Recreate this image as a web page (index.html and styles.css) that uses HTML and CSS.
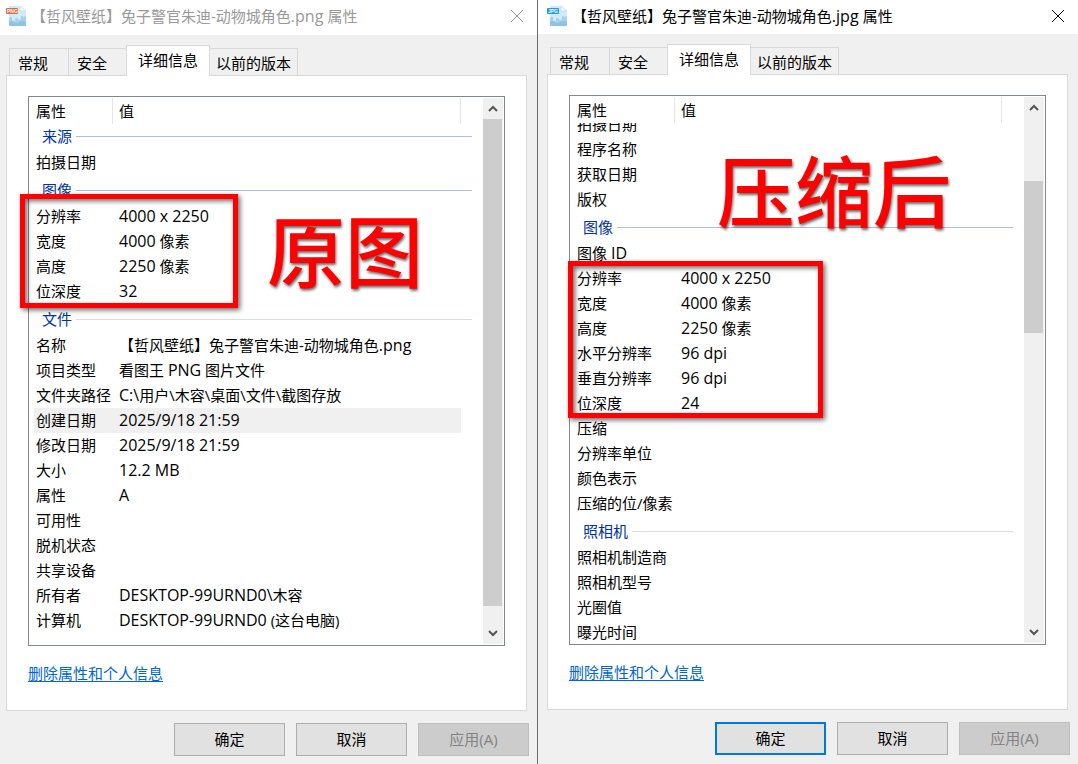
FILE: index.html
```html
<!DOCTYPE html>
<html lang="zh-CN">
<head>
  <meta charset="UTF-8" />
  <meta name="viewport" content="width=device-width, initial-scale=1.0" />
  <title>属性</title>
  <link rel="stylesheet" href="styles.css">
</head>
<body>
  <div class="desktop">

    <!-- PNG dialog -->
    <section class="dialog dialog-png">
      <header class="titlebar">
        <svg class="file-icon" viewBox="0 0 20 20" aria-hidden="true">
          <path d="M3 0h11l6 5v14l-1 1H4l-1-1z" fill="#d3ebf9" />
          <path d="M14 0v5h6z" fill="#f4fafe" stroke="#a9cfe6" stroke-width=".5" />
          <path d="M3 12q1-2 3-1v3q1 2 3 1v-2q2-2 3 0 1 2 3 0v-3q2-1 2 1l3-1v9l-1 1H4l-1-1z" fill="#a4d1ee" />
          <path d="M3 16q3-2 5 0t5 0 7 0v3l-1 1H4l-1-1z" fill="#8cc3e6" />
          <rect y="2" width="12" height="6" rx="1" fill="#e2683c" />
          <text x="1" y="7" class="icon-text">PNG</text>
        </svg>
        <h1 class="title">【哲风壁纸】兔子警官朱迪-动物城角色<span class="latin">.png </span>属性</h1>
        <button class="close" aria-label="关闭">
          <svg viewBox="0 0 12 12"><path d="M0 0l12 12M12 0L0 12" /></svg>
        </button>
      </header>

      <nav class="tabs">
        <button class="tab">常规</button>
        <button class="tab">安全</button>
        <button class="tab active">详细信息</button>
        <button class="tab last">以前的版本</button>
      </nav>

      <div class="panel">
        <div class="list">
          <div class="list-main">
            <table class="list-head">
              <colgroup><col class="col-name"><col><col class="col-end"></colgroup>
              <tr><th>属性</th><th>值</th><td></td></tr>
            </table>
            <div class="list-body">
              <table class="rows">
                <colgroup><col class="col-name"><col><col class="col-end"></colgroup>
                <tr class="group"><th colspan="3"><div>来源</div></th></tr>
                <tr><td>拍摄日期</td><td></td></tr>
                <tr class="group"><th colspan="3"><div>图像</div></th></tr>
                <tr><td>分辨率</td><td><span class="latin">4000 x 2250</span></td></tr>
                <tr><td>宽度</td><td><span class="latin">4000</span> 像素</td></tr>
                <tr><td>高度</td><td><span class="latin">2250</span> 像素</td></tr>
                <tr><td>位深度</td><td><span class="latin">32</span></td></tr>
                <tr class="group light"><th colspan="3"><div>文件</div></th></tr>
                <tr><td>名称</td><td>【哲风壁纸】兔子警官朱迪-动物城角色<span class="latin">.png</span></td></tr>
                <tr><td>项目类型</td><td>看图王 <span class="latin">PNG</span> 图片文件</td></tr>
                <tr><td>文件夹路径</td><td><span class="latin">C:\</span>用户\木容\桌面\文件\截图存放</td></tr>
                <tr class="selected"><td>创建日期</td><td><span class="latin">2025/9/18 21:59</span></td></tr>
                <tr><td>修改日期</td><td><span class="latin">2025/9/18 21:59</span></td></tr>
                <tr><td>大小</td><td><span class="latin">12.2 MB</span></td></tr>
                <tr><td>属性</td><td><span class="latin">A</span></td></tr>
                <tr><td>可用性</td><td></td></tr>
                <tr><td>脱机状态</td><td></td></tr>
                <tr><td>共享设备</td><td></td></tr>
                <tr><td>所有者</td><td><span class="latin">DESKTOP-99URND0\</span>木容</td></tr>
                <tr><td>计算机</td><td><span class="latin">DESKTOP-99URND0</span> (这台电脑)</td></tr>
              </table>
            </div>
          </div>
          <div class="scrollbar">
            <button class="arrow" aria-label="向上"><svg viewBox="0 0 10 7"><path d="M1 6l4-4 4 4" /></svg></button>
            <div class="track"><div class="thumb"></div></div>
            <button class="arrow" aria-label="向下"><svg viewBox="0 0 10 7"><path d="M1 1l4 4 4-4" /></svg></button>
          </div>
        </div>
        <a class="remove" href="#">删除属性和个人信息</a>
      </div>

      <footer class="buttons">
        <button class="btn">确定</button>
        <button class="btn">取消</button>
        <button class="btn" disabled>应用(A)</button>
      </footer>

      <div class="frame"></div>
      <div class="note">原图</div>
    </section>

    <!-- JPG dialog -->
    <section class="dialog dialog-jpg">
      <header class="titlebar">
        <svg class="file-icon" viewBox="0 0 20 20" aria-hidden="true">
          <path d="M3 0h11l6 5v14l-1 1H4l-1-1z" fill="#d3ebf9" />
          <path d="M14 0v5h6z" fill="#f4fafe" stroke="#a9cfe6" stroke-width=".5" />
          <path d="M3 12q1-2 3-1v3q1 2 3 1v-2q2-2 3 0 1 2 3 0v-3q2-1 2 1l3-1v9l-1 1H4l-1-1z" fill="#a4d1ee" />
          <path d="M3 16q3-2 5 0t5 0 7 0v3l-1 1H4l-1-1z" fill="#8cc3e6" />
          <rect y="2" width="12" height="6" rx="1" fill="#1e9be6" />
          <text x="1" y="7" class="icon-text">JPG</text>
        </svg>
        <h1 class="title">【哲风壁纸】兔子警官朱迪-动物城角色<span class="latin">.jpg </span>属性</h1>
        <button class="close" aria-label="关闭">
          <svg viewBox="0 0 12 12"><path d="M0 0l12 12M12 0L0 12" /></svg>
        </button>
      </header>

      <nav class="tabs">
        <button class="tab">常规</button>
        <button class="tab">安全</button>
        <button class="tab active">详细信息</button>
        <button class="tab last">以前的版本</button>
      </nav>

      <div class="panel">
        <div class="list">
          <div class="list-main">
            <table class="list-head">
              <colgroup><col class="col-name"><col><col class="col-end"></colgroup>
              <tr><th>属性</th><th>值</th><td></td></tr>
            </table>
            <div class="list-body">
              <table class="rows">
                <colgroup><col class="col-name"><col><col class="col-end"></colgroup>
                <tr><td>拍摄日期</td><td></td></tr>
                <tr><td>程序名称</td><td></td></tr>
                <tr><td>获取日期</td><td></td></tr>
                <tr><td>版权</td><td></td></tr>
                <tr class="group"><th colspan="3"><div>图像</div></th></tr>
                <tr><td>图像 <span class="latin">ID</span></td><td></td></tr>
                <tr><td>分辨率</td><td><span class="latin">4000 x 2250</span></td></tr>
                <tr><td>宽度</td><td><span class="latin">4000</span> 像素</td></tr>
                <tr><td>高度</td><td><span class="latin">2250</span> 像素</td></tr>
                <tr><td>水平分辨率</td><td><span class="latin">96 dpi</span></td></tr>
                <tr><td>垂直分辨率</td><td><span class="latin">96 dpi</span></td></tr>
                <tr><td>位深度</td><td><span class="latin">24</span></td></tr>
                <tr><td>压缩</td><td></td></tr>
                <tr><td>分辨率单位</td><td></td></tr>
                <tr><td>颜色表示</td><td></td></tr>
                <tr><td>压缩的位/像素</td><td></td></tr>
                <tr class="group light"><th colspan="3"><div>照相机</div></th></tr>
                <tr><td>照相机制造商</td><td></td></tr>
                <tr><td>照相机型号</td><td></td></tr>
                <tr><td>光圈值</td><td></td></tr>
                <tr><td>曝光时间</td><td></td></tr>
              </table>
            </div>
          </div>
          <div class="scrollbar">
            <button class="arrow" aria-label="向上"><svg viewBox="0 0 10 7"><path d="M1 6l4-4 4 4" /></svg></button>
            <div class="track"><div class="thumb"></div></div>
            <button class="arrow" aria-label="向下"><svg viewBox="0 0 10 7"><path d="M1 1l4 4 4-4" /></svg></button>
          </div>
        </div>
        <a class="remove" href="#">删除属性和个人信息</a>
      </div>

      <footer class="buttons">
        <button class="btn default">确定</button>
        <button class="btn">取消</button>
        <button class="btn" disabled>应用(A)</button>
      </footer>

      <div class="frame"></div>
      <div class="note">压缩后</div>
    </section>

  </div>
</body>
</html>
```
FILE: styles.css
```css
*, *::before, *::after {
  box-sizing: border-box;
}
body {
  margin: 0;
  font-family: "Open Sans", "Noto Sans CJK SC", sans-serif;
  font-size: 15px;
  line-height: 22px;
  color: #000;
  background-color: #f0f0f0;
}
button {
  font: inherit;
  color: inherit;
  border: none;
  padding: 0;
  background: none;
}
.desktop {
  display: grid;
  grid-template-columns: 537fr 541fr;
  min-height: 100vh;
}
.latin {
  font-size: 16px;
  line-height: 20px;
}

/* Dialog */
.dialog {
  position: relative;
  background-color: #f0f0f0;
}
.dialog-png {
  padding: 0 10px 0 6px;
}
.dialog-jpg {
  padding: 0 10px 0 9px;
  border-left: 1px solid #6b6b6b;
}
.titlebar {
  display: flex;
  align-items: center;
  gap: 5px;
  height: 35px;
  margin: 0 -10px 0 -6px;
  padding: 0 14px 3px 6px;
  background-color: #fff;
}
.dialog-png .titlebar {
  color: #999;
}
.dialog-jpg .titlebar {
  height: 34px;
  margin-left: -9px;
  padding-left: 9px;
}
.file-icon {
  width: 20px;
  height: 20px;
}
.icon-text {
  font: bold 5px "Liberation Sans", sans-serif;
  fill: #fff;
}
.title {
  flex: 1;
  margin: 0;
  font-size: 15px;
  font-weight: normal;
  white-space: nowrap;
}
.close {
  display: flex;
}
.close svg {
  width: 12px;
  height: 12px;
  overflow: visible;
  stroke: currentColor;
}

/* Tabs */
.tabs {
  display: flex;
  align-items: flex-end;
  height: 40px;
  padding-left: 3px;
}
.tab {
  height: 27px;
  padding: 1px 20px 0 8px;
  border: 1px solid #d9d9d9;
  border-width: 1px 0 0 1px;
  white-space: nowrap;
}
.tab.active {
  position: relative;
  height: 31px;
  margin: 0 0 -1px -1px;
  padding: 0 11px 2px;
  border-width: 1px 1px 0;
  background-color: #fff;
}
.tab.last {
  padding: 1px 6px 0;
  border-width: 1px 1px 0 0;
}

/* Details page */
.panel {
  height: 636px;
  padding: 20px 21px 0;
  border: 1px solid #d9d9d9;
  background-color: #fff;
}
.list {
  display: flex;
  height: 550px;
  padding-right: 1px;
  border: 1px solid #828790;
}
.list-main {
  flex: 1;
  display: flex;
  flex-direction: column;
  padding: 1px 11px 0 5px;
}
table {
  width: 100%;
  table-layout: fixed;
  border-collapse: separate;
  border-spacing: 0;
}
.col-name {
  width: 79px;
}
.dialog-jpg .col-name {
  width: 100px;
}
.col-end {
  width: 11px;
}
th, td {
  height: 25px;
  padding: 0 0 0 6px;
  font-weight: normal;
  text-align: left;
  white-space: nowrap;
}
td {
  padding-bottom: 2px;
}
th:first-child, td:first-child {
  padding-left: 2px;
}
.list-head th {
  height: 26px;
  border-right: 1px solid #e5e5e5;
}
.list-body {
  flex: 1;
  overflow: hidden;
}
/* scroll offset of each list */
.dialog-png .rows {
  margin-top: -3px;
}
.dialog-jpg .rows {
  margin-top: -11px;
}
.group th {
  height: 29px;
}
.group div {
  display: flex;
  align-items: center;
  gap: 4px;
  padding-left: 6px;
  color: #003399;
}
.group div::after {
  content: "";
  flex: 1;
  height: 1px;
  margin-top: 2px;
  background-color: #b0bfe0;
}
.group.light div::after {
  background-color: #d6dde9;
}
.selected td {
  background-color: #f0f0f0;
}

/* Scrollbar */
.scrollbar {
  display: flex;
  flex-direction: column;
  width: 20px;
  margin: 1px 0;
  background-color: #f0f0f0;
}
.arrow {
  display: flex;
  align-items: center;
  justify-content: center;
  height: 21px;
}
.arrow svg {
  width: 10px;
  height: 7px;
  fill: none;
  stroke: #555;
  stroke-width: 2;
}
.track {
  flex: 1;
}
.thumb {
  width: 19px;
  height: 487px;
  background-color: #cdcdcd;
}
.dialog-jpg .thumb {
  height: 152px;
  margin-top: 63px;
}
.remove {
  display: inline-block;
  margin-top: 16px;
  color: #0066cc;
  text-underline-offset: 2px;
}

/* Bottom buttons */
.buttons {
  display: flex;
  justify-content: flex-end;
  gap: 11px;
  margin: 12px -2px 8px 0;
}
.btn {
  width: 111px;
  height: 33px;
  padding-bottom: 2px;
  border: 1px solid #adadad;
  background-color: #e1e1e1;
}
.btn.default {
  border: 2px solid #0078d7;
}
.btn:disabled {
  border-color: #bfbfbf;
  background-color: #cccccc;
  color: #838383;
}

/* Red marks over the dialogs */
.frame {
  position: absolute;
  left: 20px;
  top: 194px;
  width: 218px;
  height: 114px;
  border: 5px solid #f00;
  box-shadow: 2px 2px 5px rgba(0, 0, 0, .6), inset 2px 2px 5px rgba(0, 0, 0, .6);
}
.note {
  position: absolute;
  left: 267px;
  top: 208px;
  font-family: "Noto Sans CJK SC", sans-serif;
  font-size: 78px;
  font-weight: 500;
  line-height: 80px;
  color: #f00;
  text-shadow: 1px 2px 3px rgba(0, 0, 0, .6);
  white-space: nowrap;
}
.dialog-jpg .frame {
  left: 30px;
  top: 261px;
  width: 255px;
  height: 157px;
}
.dialog-jpg .note {
  left: 179px;
  top: 148px;
}
```
